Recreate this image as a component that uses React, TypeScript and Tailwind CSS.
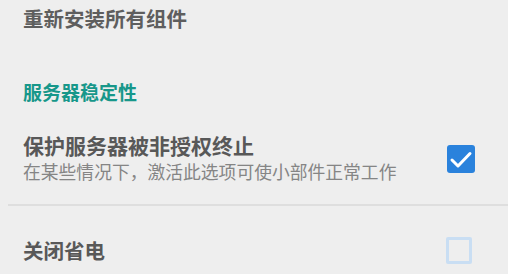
import React from "react";

const FONT = '"Noto Sans CJK SC", "Noto Sans", sans-serif';

function CheckBox({ checked }: { checked: boolean }) {
  if (checked) {
    return (
      <div className="flex h-[28px] w-[28px] items-center justify-center rounded-[3px] bg-[#2a82dc]">
        <svg width="28" height="28" viewBox="0 0 28 28" fill="none">
          <polyline
            points="5,15 11,21 23,8.5"
            stroke="white"
            strokeWidth="3"
            strokeLinecap="round"
            strokeLinejoin="round"
          />
        </svg>
      </div>
    );
  }
  return (
    <div className="h-[27px] w-[26px] rounded-[2px] border-[3px] border-[#c9def3]" />
  );
}

export default function App() {
  return (
    <div
      className="h-[274px] w-[508px] overflow-hidden bg-[#eeeeee]"
      style={{ fontFamily: FONT }}
    >
      <div className="pl-[23px] text-[20.5px] leading-[36px] font-bold text-[#5e5e5e]">
        重新安装所有组件
      </div>

      <div className="mt-[44px] pl-[23px] text-[19px] leading-[24px] font-bold text-[#17978a]">
        服务器稳定性
      </div>

      <div className="mt-[28px] flex items-center justify-between pl-[23px] pr-[33px]">
        <div className="flex flex-col">
          <div className="text-[21px] leading-[27px] font-bold text-[#585858]">
            保护服务器被非授权终止
          </div>
          <div className="text-[17.8px] leading-[24px] text-[#858585]">
            在某些情况下，激活此选项可使小部件正常工作
          </div>
        </div>
        <div className="mt-[2px]">
          <CheckBox checked />
        </div>
      </div>

      <div className="ml-[8px] mt-[21px] h-[2px] bg-[#dedede]" />

      <div className="mt-[30px] flex items-center justify-between pl-[23px] pr-[36px]">
        <div className="text-[20.5px] leading-[28px] font-bold text-[#585858]">
          关闭省电
        </div>
        <CheckBox checked={false} />
      </div>
    </div>
  );
}
